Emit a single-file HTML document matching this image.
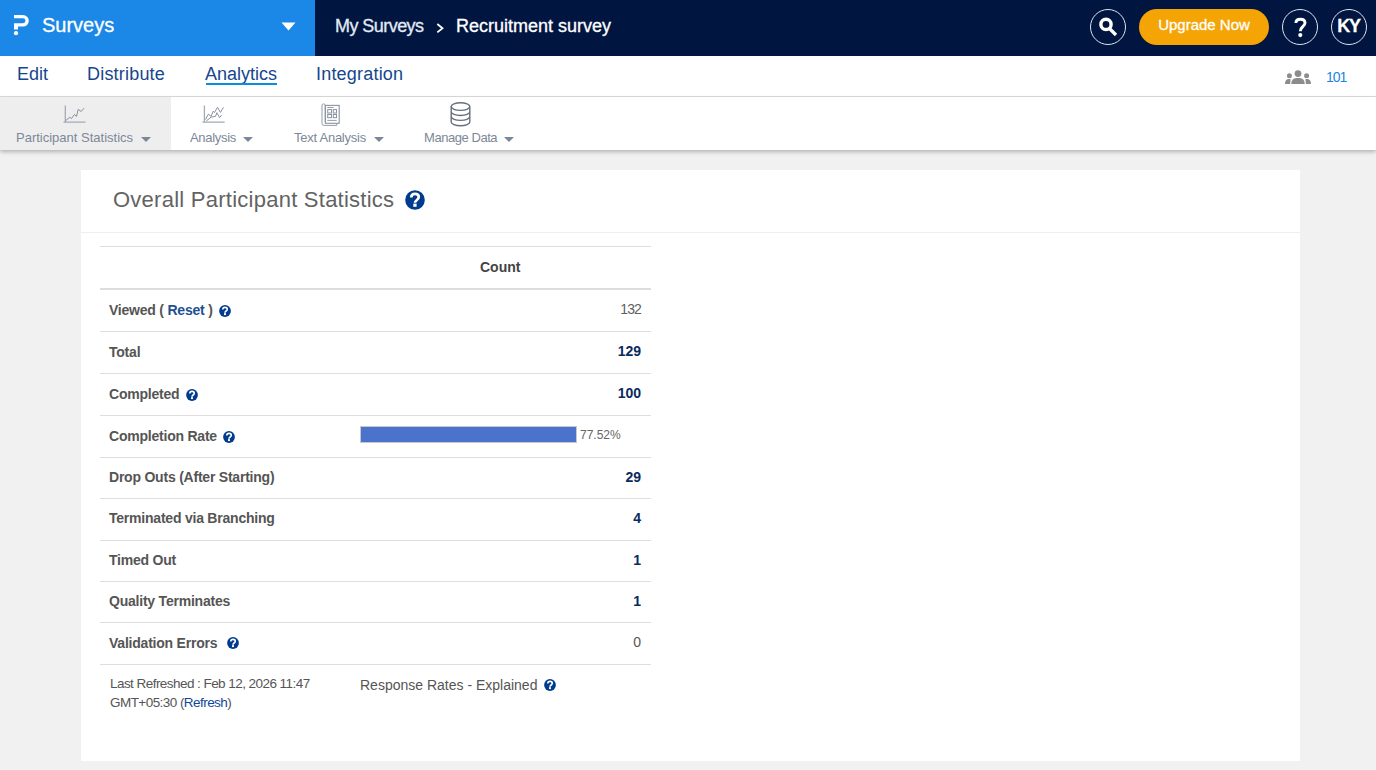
<!DOCTYPE html>
<html><head><meta charset="utf-8">
<style>
*{box-sizing:border-box;margin:0;padding:0}
html,body{width:1376px;height:770px;overflow:hidden;background:#f1f1f1;font-family:"Liberation Sans",sans-serif}
.abs{position:absolute}
svg{display:block}
#hdr{position:absolute;left:0;top:0;width:1376px;height:56px;background:#001641}
#brand{position:absolute;left:0;top:0;width:315px;height:56px;background:#1b87e6}
.wt{color:#fff;white-space:nowrap;-webkit-text-stroke:0.3px currentColor}
.circ{position:absolute;top:9px;width:36px;height:36px;border:1.5px solid #dfe3ec;border-radius:50%}
#nav{position:absolute;left:0;top:56px;width:1376px;height:41px;background:#fff;border-bottom:1px solid #dcdcdc}
.nv{position:absolute;top:8px;font-size:18px;color:#15468e;white-space:nowrap}
#tb{position:absolute;left:0;top:97px;width:1376px;height:53px;background:#fff;box-shadow:0 2px 4px rgba(0,0,0,.25)}
.tl{position:absolute;top:33px;font-size:13px;color:#7d8799;white-space:nowrap}
.caret{position:absolute;width:0;height:0;border-left:5px solid transparent;border-right:5px solid transparent;border-top:5px solid #7d8799}
#card{position:absolute;left:81px;top:170px;width:1219px;height:591px;background:#fff}
.row{position:absolute;left:100px;width:551px;border-bottom:1px solid #dedede}
.lb{position:absolute;left:9px;font-size:14px;font-weight:bold;color:#555;white-space:nowrap;letter-spacing:-0.22px}
.vl{position:absolute;right:10px;font-size:14px;font-weight:bold;color:#0a2a5e;white-space:nowrap}
.hq{position:absolute}
</style></head><body>
<svg width="0" height="0" style="position:absolute"><defs>
<symbol id="q" viewBox="0 0 20 20"><circle cx="10" cy="10" r="9.8" fill="#003b8e"/><path d="M6.3 7.6C6.3 5.1 7.9 3.9 10 3.9C12.4 3.9 13.8 5.2 13.8 7.1C13.8 9.9 10 10.1 10 12.8" fill="none" stroke="#fff" stroke-width="2.7"/><rect x="8.3" y="13.6" width="3.3" height="3.2" fill="#fff"/></symbol>
</defs></svg>
<div id="hdr">
  <div id="brand">
    <svg class="abs" style="left:10px;top:12px" width="24" height="26" viewBox="0 0 24 26">
      <path d="M4 3H13A5.8 5.8 0 0 1 13 14.6H8V17.6H4V11.2H13A2.45 2.45 0 0 0 13 6.3H4Z" fill="#fff"/>
      <circle cx="6" cy="21.2" r="2.1" fill="#fff"/>
    </svg>
    <div class="abs wt" style="left:42px;top:14px;font-size:20px">Surveys</div>
    <svg class="abs" style="left:281px;top:22px" width="15" height="9" viewBox="0 0 15 9"><path d="M0.5 0.5H14.5L7.5 8.5Z" fill="#fff"/></svg>
  </div>
  <div class="abs wt" style="left:335px;top:16px;font-size:18px;color:#e3eaf5;letter-spacing:-0.55px">My Surveys</div>
  <svg class="abs" style="left:436px;top:23px" width="9" height="11" viewBox="0 0 9 11"><path d="M1.3 1L6.5 5.2L1.3 9.4" fill="none" stroke="#fff" stroke-width="1.8"/></svg>
  <div class="abs wt" style="left:456px;top:16px;font-size:18px">Recruitment survey</div>
  <div class="circ" style="left:1090px">
    <svg class="abs" style="left:-1.5px;top:-1.5px" width="36" height="36" viewBox="0 0 36 36">
      <circle cx="16" cy="15.4" r="5.1" fill="none" stroke="#fff" stroke-width="3.4"/>
      <path d="M19.5 19.5L26 26" stroke="#fff" stroke-width="3.2"/>
    </svg>
  </div>
  <div class="abs" style="left:1139px;top:9px;width:130px;height:36px;border-radius:18px;background:#f5a405"></div>
  <div class="abs wt" style="left:1139px;top:16px;width:130px;text-align:center;font-size:15px">Upgrade Now</div>
  <div class="circ" style="left:1282px">
    <svg class="abs" style="left:-1.5px;top:-2.5px" width="36" height="40" viewBox="0 0 36 40" >
      <path d="M13.9 15C13.9 12.2 15.8 11.3 18.4 11.3C21.2 11.3 23 12.7 23 15.1C23 18.3 18.3 18.6 18.3 23.2" fill="none" stroke="#fff" stroke-width="2.9"/>
      <circle cx="18.3" cy="27.1" r="2.1" fill="#fff"/>
    </svg>
  </div>
  <div class="circ" style="left:1331px"><div class="abs wt" style="left:0;width:33px;top:6px;text-align:center;font-size:18px;font-weight:bold;letter-spacing:-1.2px">KY</div></div>
</div>

<div id="nav">
  <div class="nv" style="left:17px">Edit</div>
  <div class="nv" style="left:87px;letter-spacing:0.2px">Distribute</div>
  <div class="nv" style="left:205px">Analytics</div>
  <div class="abs" style="left:206px;top:27px;width:71px;height:2px;background:#0b8fd9"></div>
  <div class="nv" style="left:316px;letter-spacing:0.2px">Integration</div>
  <svg class="abs" style="left:1280px;top:6px" width="36" height="26" viewBox="0 0 36 26">
    <circle cx="18" cy="11.6" r="3.4" fill="#8c8c8c"/>
    <path d="M11.3 21.9C11.3 17.6 13.5 16 18 16C22.5 16 24.7 17.6 24.7 21.9Z" fill="#8c8c8c"/>
    <circle cx="9.4" cy="13.8" r="2.5" fill="#8c8c8c"/>
    <path d="M5 21.9C5 18.6 6.5 17.1 9 17.1C9.8 17.1 10.3 17.2 10.7 17.4C10.3 18.5 10.2 20 10.2 21.9Z" fill="#8c8c8c"/>
    <circle cx="26.6" cy="13.8" r="2.5" fill="#8c8c8c"/>
    <path d="M31 21.9C31 18.6 29.5 17.1 27 17.1C26.2 17.1 25.7 17.2 25.3 17.4C25.7 18.5 25.8 20 25.8 21.9Z" fill="#8c8c8c"/>
  </svg>
  <div class="abs" style="left:1326px;top:13px;font-size:14px;color:#1a86e0;letter-spacing:-1px">101</div>
</div>

<div id="tb">
  <div class="abs" style="left:0;top:0;width:171px;height:53px;background:#eeeeee"></div>
  <svg class="abs" style="left:58px;top:3px" width="36" height="28" viewBox="0 0 36 28">
    <path d="M7.3 5.5V22.2M5.5 22.2H27.6" fill="none" stroke="#a3abb7" stroke-width="1.3"/>
    <path d="M7.6 20.7L11.6 17.3L13.5 18.5L16.4 14.5L18.5 16.4L20.2 9.3L23.1 11.5L26 8.2" fill="none" stroke="#7c8593" stroke-width="0.9"/>
  </svg>
  <div class="tl" style="left:16px">Participant Statistics</div>
  <div class="caret" style="left:141px;top:40px"></div>
  <svg class="abs" style="left:198px;top:3px" width="36" height="28" viewBox="0 0 36 28">
    <path d="M6.4 5.5V22.2M4.4 22.2H26.7" fill="none" stroke="#a3abb7" stroke-width="1.3"/>
    <path d="M7.3 19.6L10.4 14.2L13.1 16.4L15.1 11.3L16.5 12.5L19.5 7.3L22.4 12.4L25.5 7.3M8.4 20.9L13.1 17.1L17.5 16.4L18.9 12.7L21.5 17.6L23.8 14.9" fill="none" stroke="#7c8593" stroke-width="0.9"/>
  </svg>
  <div class="tl" style="left:190px;letter-spacing:-0.3px">Analysis</div>
  <div class="caret" style="left:243px;top:40px"></div>
  <svg class="abs" style="left:314px;top:1px" width="32" height="32" viewBox="0 0 32 32">
    <path d="M8 25.5V7A1.7 1.7 0 0 1 11.2 7V24M8 25.5A1.9 1.9 0 0 0 10 27.4H22.8V25.4" fill="none" stroke="#959daa" stroke-width="1"/>
    <rect x="11.4" y="7.4" width="13.8" height="17.9" fill="none" stroke="#8a93a0" stroke-width="1.1"/>
    <path d="M13.3 9.5H19.7M13.3 22.4H22.7" stroke="#8a93a0" stroke-width="0.9"/>
    <rect x="13.7" y="11.6" width="3.8" height="3.4" fill="none" stroke="#8a93a0" stroke-width="1"/>
    <rect x="19.3" y="11.6" width="3.2" height="3.4" fill="none" stroke="#8a93a0" stroke-width="1"/>
    <rect x="13.7" y="16.5" width="3.8" height="3.2" fill="none" stroke="#8a93a0" stroke-width="1"/>
    <rect x="19.3" y="16.5" width="3.2" height="3.2" fill="none" stroke="#8a93a0" stroke-width="1"/>
  </svg>
  <div class="tl" style="left:294px;letter-spacing:-0.25px">Text Analysis</div>
  <div class="caret" style="left:374px;top:40px"></div>
  <svg class="abs" style="left:444px;top:1px" width="32" height="32" viewBox="0 0 32 32">
    <ellipse cx="16.5" cy="8.6" rx="9.3" ry="3.8" fill="none" stroke="#66707d" stroke-width="1.4"/>
    <path d="M7.2 8.6V24C7.2 26.1 11.4 27.8 16.5 27.8S25.8 26.1 25.8 24V8.6M7.2 13.7C7.2 15.8 11.4 17.5 16.5 17.5S25.8 15.8 25.8 13.7M7.2 18.6C7.2 20.7 11.4 22.4 16.5 22.4S25.8 20.7 25.8 18.6" fill="none" stroke="#66707d" stroke-width="1.4"/>
  </svg>
  <div class="tl" style="left:424px;letter-spacing:-0.45px">Manage Data</div>
  <div class="caret" style="left:504px;top:40px"></div>
</div>

<div id="card">
  <div class="abs" style="left:32px;top:17px;font-size:22px;color:#636363;white-space:nowrap;letter-spacing:0.25px">Overall Participant Statistics</div>
  <svg class="hq" style="left:324px;top:19.5px" width="20" height="20"><use href="#q"/></svg>
  <div class="abs" style="left:0;top:62px;width:1219px;height:1px;background:#eeeef2"></div>
</div>

<div class="abs" style="left:100px;top:246px;width:551px;height:1px;background:#dedede"></div>
<div class="abs" style="left:480px;top:259px;font-size:14px;font-weight:bold;color:#444">Count</div>
<div class="abs" style="left:100px;top:288px;width:551px;height:2px;background:#dcdcdc"></div>

<div class="row" style="top:290px;height:42px"><div class="lb" style="top:12px">Viewed ( <span style="color:#1d4f91">Reset</span> )</div><svg class="hq" style="left:118.5px;top:15px" width="12" height="12"><use href="#q"/></svg><div class="vl" style="top:11px;font-weight:normal;color:#606060;letter-spacing:-0.9px">132</div></div>
<div class="row" style="top:332px;height:42px"><div class="lb" style="top:12px">Total</div><div class="vl" style="top:11px">129</div></div>
<div class="row" style="top:374px;height:42px"><div class="lb" style="top:12px">Completed</div><svg class="hq" style="left:86px;top:15px" width="12" height="12"><use href="#q"/></svg><div class="vl" style="top:11px">100</div></div>
<div class="row" style="top:416px;height:42px"><div class="lb" style="top:12px">Completion Rate</div><svg class="hq" style="left:123px;top:15px" width="12" height="12"><use href="#q"/></svg>
  <div class="abs" style="left:260px;top:10px;width:217px;height:17px;background:#4b72cc;border:1px solid #c8c8c8"></div>
  <div class="abs" style="left:480px;top:12px;font-size:12px;color:#666">77.52%</div></div>
<div class="row" style="top:458px;height:41px"><div class="lb" style="top:11px">Drop Outs (After Starting)</div><div class="vl" style="top:11px">29</div></div>
<div class="row" style="top:499px;height:42px"><div class="lb" style="top:11px">Terminated via Branching</div><div class="vl" style="top:11px">4</div></div>
<div class="row" style="top:541px;height:41px"><div class="lb" style="top:11px">Timed Out</div><div class="vl" style="top:11px">1</div></div>
<div class="row" style="top:582px;height:41px"><div class="lb" style="top:11px">Quality Terminates</div><div class="vl" style="top:11px">1</div></div>
<div class="row" style="top:623px;height:42px"><div class="lb" style="top:12px">Validation Errors</div><svg class="hq" style="left:127px;top:14px" width="12" height="12"><use href="#q"/></svg><div class="vl" style="top:11px;font-weight:normal;color:#555">0</div></div>

<div class="abs" style="left:110px;top:674px;font-size:13.5px;color:#555;line-height:19.2px;white-space:nowrap;letter-spacing:-0.55px">Last Refreshed : Feb 12, 2026 11:47<br>GMT+05:30 (<span style="color:#0f4796">Refresh</span>)</div>
<div class="abs" style="left:360px;top:677px;font-size:14px;color:#555;white-space:nowrap">Response Rates - Explained</div>
<svg class="hq" style="left:543.5px;top:679px" width="12" height="12"><use href="#q"/></svg>
</body></html>
